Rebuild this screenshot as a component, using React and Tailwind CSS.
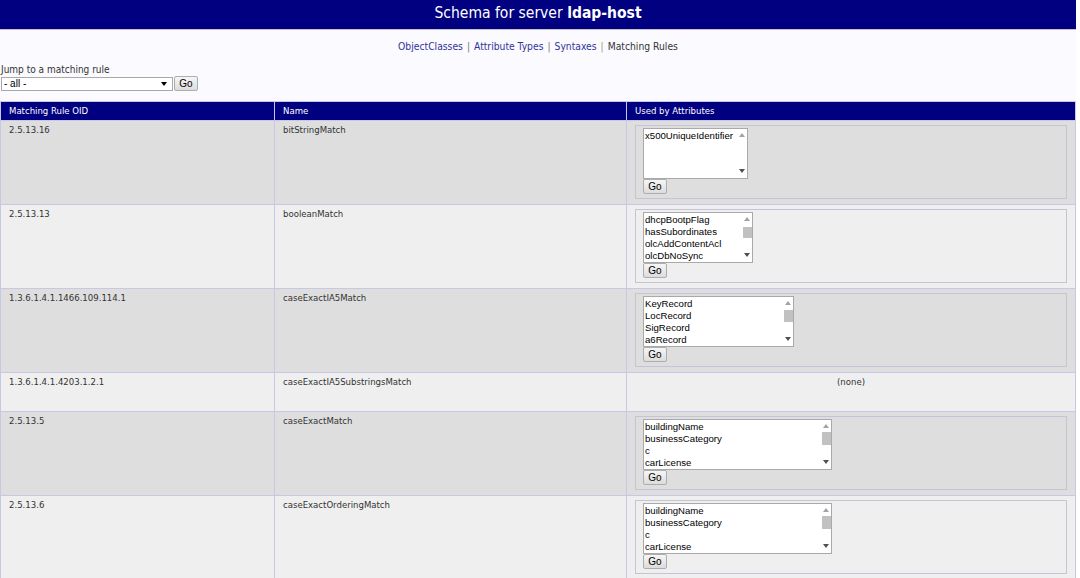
const rows = [
  { oid: '2.5.13.16', name: 'bitStringMatch', attrs: ['x500UniqueIdentifier'], w: 'w-[105px]', thumb: null, bg: 'bg-[#dedede]' },
  { oid: '2.5.13.13', name: 'booleanMatch', attrs: ['dhcpBootpFlag', 'hasSubordinates', 'olcAddContentAcl', 'olcDbNoSync'], w: 'w-[110px]', thumb: 'mt-[6px] h-[11px]', bg: 'bg-[#efefef]' },
  { oid: '1.3.6.1.4.1.1466.109.114.1', name: 'caseExactIA5Match', attrs: ['KeyRecord', 'LocRecord', 'SigRecord', 'a6Record'], w: 'w-[151px]', thumb: 'mt-[5px] h-[12px]', bg: 'bg-[#dedede]' },
  { oid: '1.3.6.1.4.1.4203.1.2.1', name: 'caseExactIA5SubstringsMatch', attrs: null, bg: 'bg-[#efefef]' },
  { oid: '2.5.13.5', name: 'caseExactMatch', attrs: ['buildingName', 'businessCategory', 'c', 'carLicense'], w: 'w-[189px]', thumb: 'mt-[4px] h-[13px]', bg: 'bg-[#dedede]' },
  { oid: '2.5.13.6', name: 'caseExactOrderingMatch', attrs: ['buildingName', 'businessCategory', 'c', 'carLicense'], w: 'w-[189px]', thumb: 'mt-[4px] h-[13px]', bg: 'bg-[#efefef]' },
];

const Arrow = ({ down }) => (
  <svg width="6" height="4" viewBox="0 0 6 4" className="shrink-0">
    <path d={down ? 'M0 0h6L3 4z' : 'M0 4h6L3 0z'} fill={down ? '#505050' : '#a3a3a3'} />
  </svg>
);

const GoButton = () => (
  <button className="h-[15px] w-[24px] rounded-[2px] border border-[#adadad] bg-gradient-to-b from-[#f6f6f6] to-[#dcdcdc] text-[10px] leading-none text-black [font-family:'Liberation_Sans',Arial,sans-serif]">
    Go
  </button>
);

const ListBox = ({ attrs, w, thumb }) => (
  <div className={`flex h-[51px] border border-[#a9a9a9] bg-white ${w}`}>
    <div className="flex-1 overflow-hidden pl-px pt-px text-[9.6px] leading-[12px] text-black [font-family:'Liberation_Sans',Arial,sans-serif]">
      {attrs.map((a, i) => (
        <div key={i}>{a}</div>
      ))}
    </div>
    <div className="flex w-[10px] flex-col items-center pt-[4px] pb-[5px]">
      <Arrow />
      {thumb ? <div className={`w-[9px] bg-[#c1c1c1] ${thumb}`} /> : null}
      <div className="flex-1" />
      <Arrow down />
    </div>
  </div>
);

export default function App() {
  return (
    <div className="min-h-screen w-[1076px] bg-[#fafaff] text-[9.5px] text-[#333] [font-family:'DejaVu_Sans_Condensed','DejaVu_Sans',Tahoma,sans-serif]">
      {/* Title bar */}
      <div className="flex h-[30px] items-center justify-center border-b border-[#c4c4c4] bg-[#000080] pb-[2px] text-[15.5px] text-white">
        Schema for server&nbsp;<b>ldap-host</b>
      </div>

      {/* Section links */}
      <div className="mt-[9px] flex justify-center gap-[4px] text-[10.25px] leading-[15px]">
        <a className="text-[#333399]">ObjectClasses</a>
        <span className="text-[#777]">|</span>
        <a className="text-[#333399]">Attribute Types</a>
        <span className="text-[#777]">|</span>
        <a className="text-[#333399]">Syntaxes</a>
        <span className="text-[#b08f5c]">|</span>
        <span className="text-[#333]">Matching Rules</span>
      </div>

      {/* Jump form */}
      <div className="mt-[10px] pl-px">
        <div className="text-[10px] leading-[12px]">Jump to a matching rule</div>
        <div className="flex items-center gap-px">
          <div className="flex h-[14px] w-[172px] items-center justify-between border border-[#a9a9a9] bg-white pl-[2px] pr-[5px] text-[10px] text-black [font-family:'Liberation_Sans',Arial,sans-serif]">
            <span>- all -</span>
            <svg width="6" height="4" viewBox="0 0 6 4">
              <path d="M0 0h6L3 4z" fill="#000" />
            </svg>
          </div>
          <GoButton />
        </div>
      </div>

      {/* Matching rules table */}
      <div className="mt-[10px] grid grid-cols-[273px_351px_448px] gap-x-px gap-y-px bg-[#c8c8e4] p-px leading-[14px]">
        <div className="bg-[#000080] px-2 py-[2px] text-white">Matching Rule OID</div>
        <div className="bg-[#000080] px-2 py-[2px] text-white">Name</div>
        <div className="bg-[#000080] px-2 py-[2px] text-white">Used by Attributes</div>

        {rows.map((r) => (
          <Row key={r.oid + r.name} r={r} />
        ))}
      </div>
    </div>
  );
}

const Row = ({ r }) => (
  <>
    <div className={`${r.bg} px-2 pt-[2px] ${r.attrs ? 'h-[83px]' : 'h-[38px]'}`}>{r.oid}</div>
    <div className={`${r.bg} px-2 pt-[2px]`}>{r.name}</div>
    {r.attrs ? (
      <div className={`${r.bg} px-2 pt-[4px]`}>
        <div className="h-[74px] border border-[#c4c4d4] px-[7px] pt-[2px]">
          <ListBox attrs={r.attrs} w={r.w} thumb={r.thumb} />
          <GoButton />
        </div>
      </div>
    ) : (
      <div className={`${r.bg} pt-[2px] text-center`}>(none)</div>
    )}
  </>
);
